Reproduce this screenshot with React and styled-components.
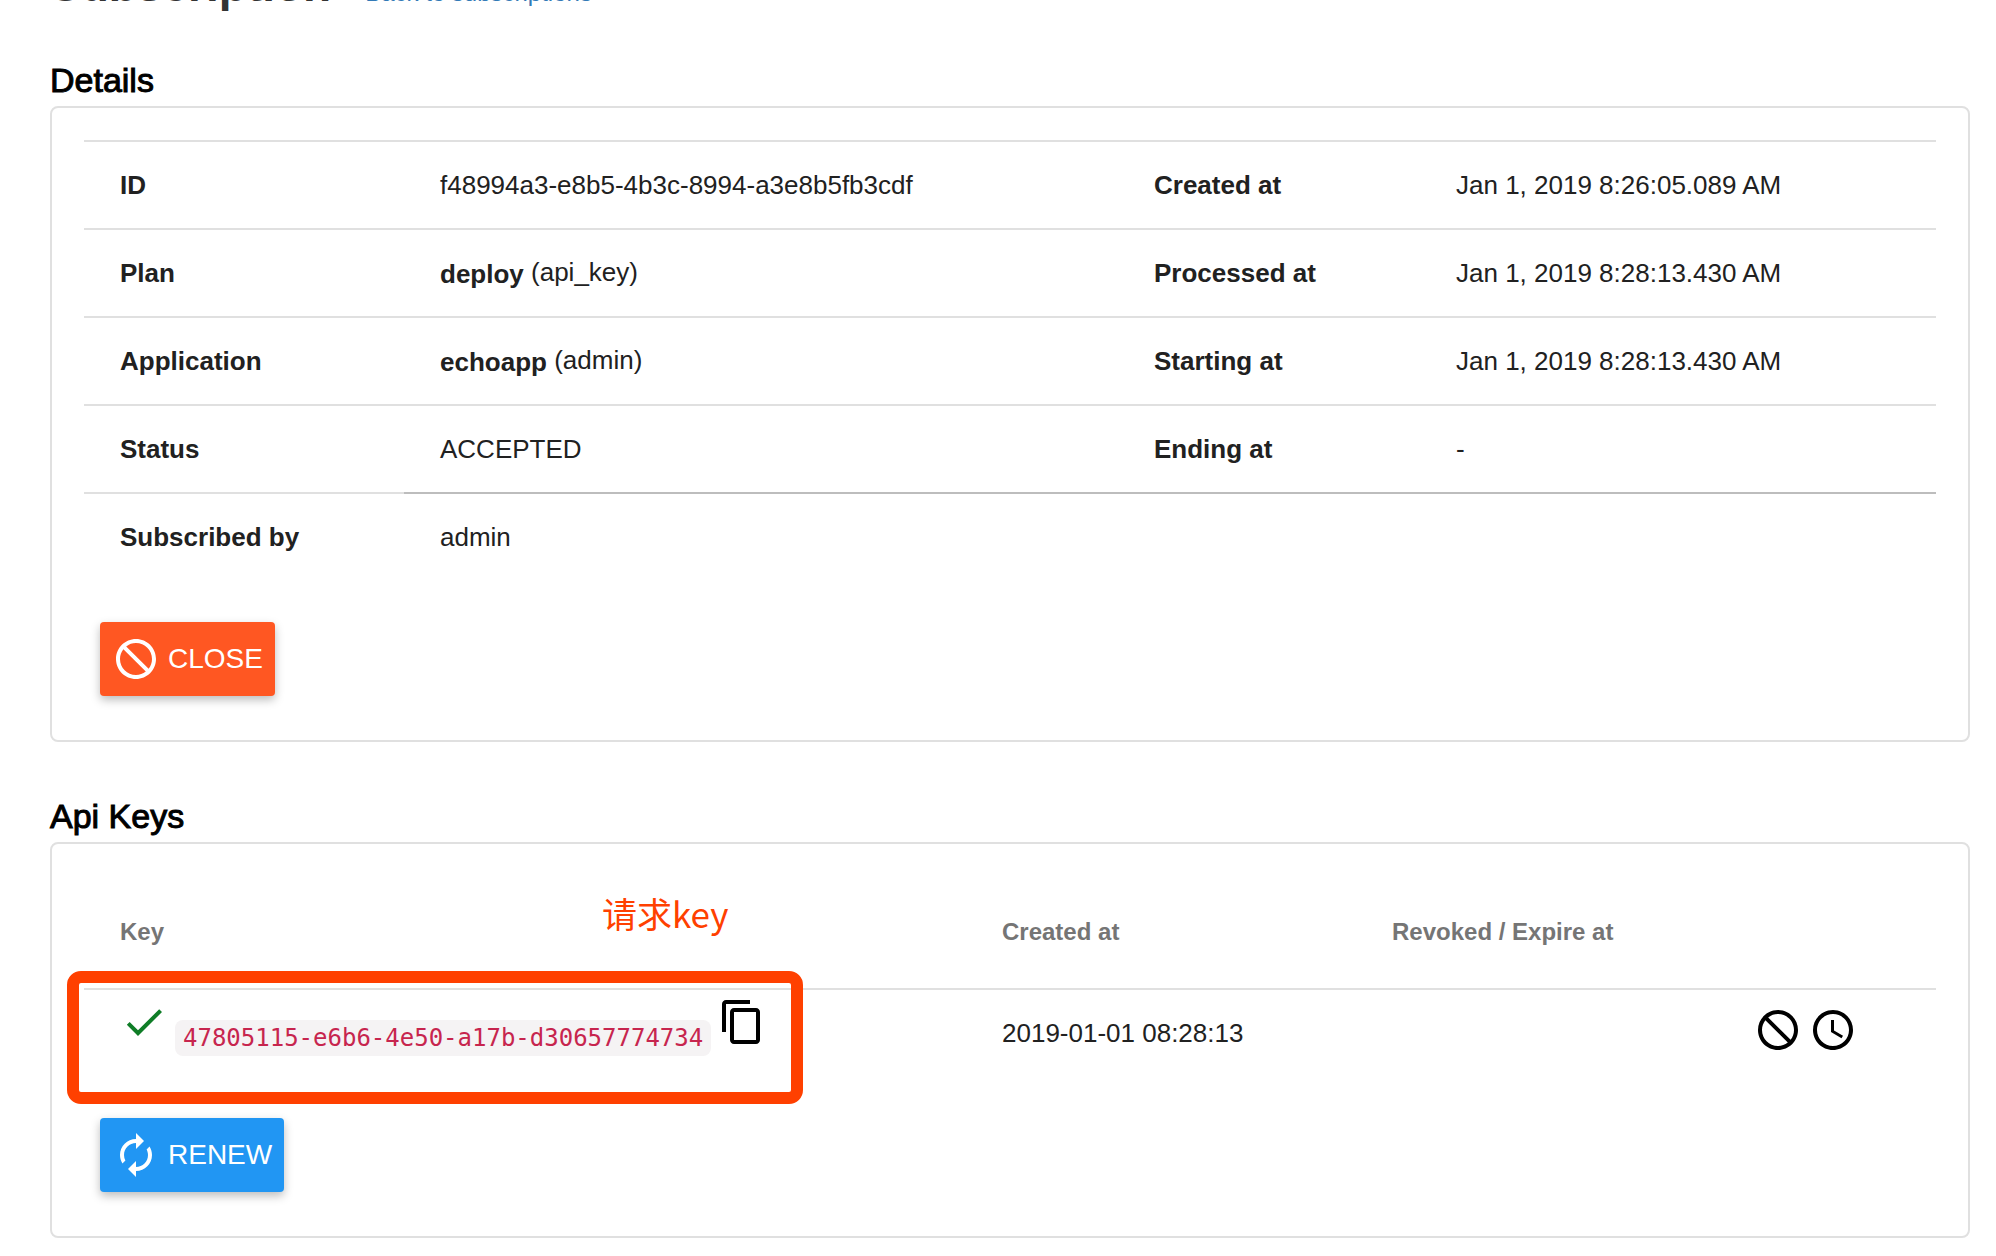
import styled, { createGlobalStyle } from "styled-components";
import {
  MdAccessTime,
  MdAutorenew,
  MdCheck,
  MdContentCopy,
  MdNotInterested,
} from "react-icons/md";

const GlobalStyle = createGlobalStyle`
  body {
    margin: 0;
    background-color: #fff;
    color: #212121;
    font-family: "Helvetica Neue", "Liberation Sans", Arial, sans-serif;
    font-size: 26px;
    line-height: 30px;
  }

  * {
    box-sizing: border-box;
  }
`;

const Container = styled.main`
  padding: 0 26px 18px 50px;
  overflow: hidden;
`;

const Header = styled.header`
  display: flex;
  align-items: baseline;
  gap: 34px;
  margin-top: -43px;
`;

const PageTitle = styled.h1`
  margin: 0;
  color: #333;
  font-size: 46px;
  line-height: 56px;
`;

const BackLink = styled.a`
  color: #337ab7;
  font-size: 24px;
  text-decoration: none;
`;

const Section = styled.section`
  margin-top: ${(props) => (props.$first ? "47px" : "54px")};
`;

const SectionTitle = styled.h2`
  margin: 0 0 6px;
  color: #000;
  font-size: 34px;
  font-weight: 400;
  line-height: 40px;
  -webkit-text-stroke: 1px #000;
`;

const Card = styled.div`
  padding: 32px 32px 44px;
  border: 2px solid #e0e0e0;
  border-radius: 8px;
`;

const Table = styled.table`
  width: 100%;
  table-layout: fixed;
  border-spacing: 0;
  text-align: left;
`;

const Col = styled.col`
  width: ${(props) => props.$width || "auto"};
`;

const HeadCell = styled.th`
  height: 112px;
  padding: 0 36px;
  color: #757575;
  font-size: 24px;
`;

const Label = styled.th`
  height: 88px;
  padding: 0 36px;
  border-top: 2px solid #e0e0e0;
`;

const Cell = styled.td`
  height: 88px;
  padding: 0 36px;
  border-top: 2px solid ${(props) => (props.$dark ? "#bdbdbd" : "#e0e0e0")};
`;

const KeyCell = styled(Cell)`
  padding-top: 8px;
  vertical-align: top;
`;

const Name = styled.strong`
  vertical-align: middle;
`;

const KeyLine = styled.div`
  display: flex;
  align-items: baseline;
  gap: 7px;
`;

const ActiveIcon = styled(MdCheck)`
  flex: none;
  color: #0f7d27;
`;

const Code = styled.code`
  padding: 4px 8px;
  border-radius: 8px;
  background-color: #f5f3f4;
  color: #c7254e;
  font-family: "DejaVu Sans Mono", monospace;
  font-size: 24px;
  line-height: 28px;
  white-space: nowrap;
`;

const IconButton = styled.button`
  display: inline-flex;
  padding: 0;
  border: none;
  background: none;
  color: #000;
  cursor: pointer;
`;

const Button = styled.button`
  display: flex;
  align-items: center;
  gap: 8px;
  height: 74px;
  margin: 42px 16px 0;
  padding: 0 12px;
  border: none;
  border-radius: 4px;
  background-color: ${(props) => (props.$warn ? "#ff5722" : "#2196f3")};
  box-shadow: 0 4px 10px rgba(0, 0, 0, 0.26);
  color: #fff;
  font-family: inherit;
  font-size: 28px;
  text-transform: uppercase;
  cursor: pointer;
`;

const KeyArea = styled.div`
  position: relative;
`;

// marker drawn over the key row, with its note
const Highlight = styled.div`
  position: absolute;
  top: 95px;
  left: -17px;
  width: 736px;
  height: 133px;
  border: 12px solid #ff4000;
  border-radius: 14px;
  pointer-events: none;
`;

const Note = styled.span`
  position: absolute;
  top: 13px;
  left: 518px;
  color: #ff4000;
  font-family: "Noto Sans CJK SC", sans-serif;
  font-size: 35px;
  line-height: 48px;
`;

const details = [
  ["ID", "f48994a3-e8b5-4b3c-8994-a3e8b5fb3cdf", null, "Created at", "Jan 1, 2019 8:26:05.089 AM"],
  ["Plan", "(api_key)", "deploy", "Processed at", "Jan 1, 2019 8:28:13.430 AM"],
  ["Application", "(admin)", "echoapp", "Starting at", "Jan 1, 2019 8:28:13.430 AM"],
  ["Status", "ACCEPTED", null, "Ending at", "-"],
];

const App = () => {
  return (
    <Container>
      <GlobalStyle />
      <Header>
        <PageTitle>Subscription</PageTitle>
        <BackLink href="#subscriptions">Back to subscriptions</BackLink>
      </Header>

      <Section $first>
        <SectionTitle>Details</SectionTitle>
        <Card>
          <Table>
            <colgroup>
              <Col $width="320px" />
              <Col />
              <Col $width="302px" />
              <Col $width="516px" />
            </colgroup>
            <tbody>
              {details.map(([label, value, name, dateLabel, date]) => (
                <tr key={label}>
                  <Label scope="row">{label}</Label>
                  <Cell>
                    {name && <Name>{name}</Name>} {value}
                  </Cell>
                  <Label scope="row">{dateLabel}</Label>
                  <Cell>{date}</Cell>
                </tr>
              ))}
              <tr>
                <Label scope="row">Subscribed by</Label>
                <Cell $dark colSpan={3}>
                  admin
                </Cell>
              </tr>
            </tbody>
          </Table>
          <Button $warn type="button">
            <MdNotInterested size={48} />
            Close
          </Button>
        </Card>
      </Section>

      <Section>
        <SectionTitle>Api Keys</SectionTitle>
        <Card>
          <KeyArea>
            <Table>
              <colgroup>
                <Col />
                <Col $width="390px" />
                <Col $width="362px" />
                <Col $width="218px" />
              </colgroup>
              <thead>
                <tr>
                  <HeadCell scope="col">Key</HeadCell>
                  <HeadCell scope="col">Created at</HeadCell>
                  <HeadCell scope="col">Revoked / Expire at</HeadCell>
                  <HeadCell as="td" />
                </tr>
              </thead>
              <tbody>
                <tr>
                  <KeyCell>
                    <KeyLine>
                      <ActiveIcon size={48} />
                      <Code>47805115-e6b6-4e50-a17b-d30657774734</Code>
                      <IconButton type="button" aria-label="Copy key">
                        <MdContentCopy size={48} />
                      </IconButton>
                    </KeyLine>
                  </KeyCell>
                  <Cell>2019-01-01 08:28:13</Cell>
                  <Cell />
                  <Cell>
                    <IconButton type="button" aria-label="Revoke key">
                      <MdNotInterested size={48} />
                    </IconButton>{" "}
                    <IconButton type="button" aria-label="Set expiration">
                      <MdAccessTime size={48} />
                    </IconButton>
                  </Cell>
                </tr>
              </tbody>
            </Table>
            <Highlight />
            <Note>请求key</Note>
          </KeyArea>
          <Button type="button">
            <MdAutorenew size={48} />
            Renew
          </Button>
        </Card>
      </Section>
    </Container>
  );
};

export default App;
